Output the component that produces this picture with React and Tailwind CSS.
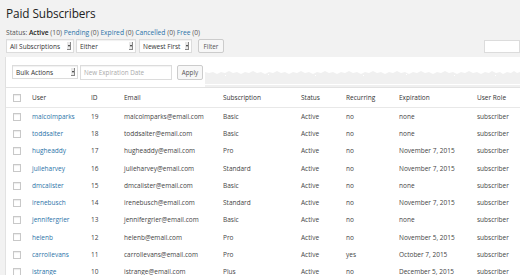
import React from "react";

const rows = [
  ["malcolmparks", "19", "Basic", "no", "none"],
  ["toddsalter", "18", "Basic", "no", "none"],
  ["hugheaddy", "17", "Pro", "no", "November 7, 2015"],
  ["julieharvey", "16", "Standard", "no", "November 7, 2015"],
  ["dmcalister", "15", "Basic", "no", "none"],
  ["irenebusch", "14", "Standard", "no", "November 7, 2015"],
  ["jennifergrier", "13", "Basic", "no", "none"],
  ["helenb", "12", "Pro", "no", "November 5, 2015"],
  ["carrollevans", "11", "Pro", "yes", "October 7, 2015"],
  ["istrange", "10", "Plus", "no", "December 5, 2015"],
];

function Select({ label, w }) {
  return (
    <div className={`flex items-center h-[14px] bg-white border border-[#dcdcdc] shadow-[inset_0_1px_1px_rgba(0,0,0,0.06)] pl-[3px] pr-[2px] ${w}`}>
      <span className="flex-1 text-[6.5px] text-[#333] leading-[9px] whitespace-nowrap">{label}</span>
      <span className="flex items-center justify-center w-[4px] h-[8px] ml-[1px] bg-[#e8e8e8] border-r border-b border-[#888]">
        <span className="w-0 h-0 border-l-[1.5px] border-r-[1.5px] border-t-[2px] border-l-transparent border-r-transparent border-t-[#222]" />
      </span>
    </div>
  );
}

function Btn({ label, w }) {
  return (
    <div className={`flex items-center justify-center h-[14px] bg-[#f7f7f7] border border-[#cccccc] rounded-[2px] text-[6.3px] leading-[9px] text-[#555] ${w}`}>
      {label}
    </div>
  );
}

function Check() {
  return <div className="w-[8px] h-[8px] border border-[#c8c8c8] bg-white shadow-[inset_0_1px_1px_rgba(0,0,0,0.08)]" />;
}

const grid = "grid grid-cols-[19px_59px_33px_99px_78px_45px_53px_78px_1fr] items-center pl-[7px]";

export default function App() {
  return (
    <div className="w-[520px] h-[275px] overflow-hidden bg-[#f2f2f2] text-[#444]" style={{ fontFamily: '"Open Sans", "Noto Sans", sans-serif' }}>
      <div className="pl-[6px] pt-[5px]">
        <div className="text-[11.8px] leading-[17px] text-[#222] tracking-[-0.1px]">Paid Subscribers</div>
        <div className="mt-[6px] text-[6.7px] leading-[9px] text-[#555] whitespace-nowrap">
          Status: <span className="text-[#222] font-semibold">Active</span> (10){" "}
          <span className="text-[#2a73a8]">Pending</span> (0){" "}
          <span className="text-[#2a73a8]">Expired</span> (0){" "}
          <span className="text-[#2a73a8]">Cancelled</span> (0){" "}
          <span className="text-[#2a73a8]">Free</span> (0)
        </div>
        <div className="flex items-center mt-[2px] h-[14px]">
          <Select label="All Subscriptions" w="w-[68px]" />
          <div className="w-[2px]" />
          <Select label="Either" w="w-[60px]" />
          <div className="w-[3px]" />
          <Select label="Newest First" w="w-[53px]" />
          <div className="w-[6px]" />
          <Btn label="Filter" w="w-[26px]" />
          <div className="flex-1" />
          <div className="w-[36px] h-[13px] bg-white border border-[#dcdcdc]" />
        </div>
      </div>
      <div className="flex mt-[4px] ml-[5px] h-[30px] border-l border-[#e0e0e0]">
        <div className="flex items-center w-[200px] bg-white pl-[6px] gap-[2px]">
          <Select label="Bulk Actions" w="w-[66px]" />
          <div className="w-[92px] h-[15px] bg-white border border-[#dcdcdc] text-[6.3px] leading-[9px] text-[#aaa] flex items-center pl-[3px] shadow-[inset_0_1px_1px_rgba(0,0,0,0.05)]">New Expiration Date</div>
          <div className="w-[1px]" />
          <Btn label="Apply" w="w-[26px] h-[15px]" />
        </div>
        <div className="flex-1 flex flex-col">
          <div className="h-[12px] bg-white" />
          <svg className="block" width="315" height="8" viewBox="0 0 315 8" preserveAspectRatio="none">
            <rect width="315" height="8" fill="#f0f0f0" />
            <path
              d="M0 0 H315 V3 L312 4 L309 2 L306 4 L302 3 L298 5 L295 3 L291 4 L287 2 L284 4 L280 3 L276 5 L272 3 L268 4 L264 2 L260 4 L256 3 L252 5 L248 3 L244 4 L240 2 L236 4 L232 3 L228 5 L224 3 L220 4 L216 2 L212 4 L208 3 L204 5 L200 3 L196 4 L192 2 L188 4 L184 3 L180 5 L176 3 L172 4 L168 2 L164 4 L160 3 L156 5 L152 3 L148 4 L144 2 L140 4 L136 3 L132 5 L128 3 L124 4 L120 2 L116 4 L112 3 L108 5 L104 3 L100 4 L96 2 L92 4 L88 3 L84 5 L80 3 L76 4 L72 2 L68 4 L64 3 L60 5 L56 3 L52 4 L48 2 L44 4 L40 3 L36 5 L32 3 L28 4 L24 2 L20 4 L16 3 L12 5 L8 3 L4 4 L0 3 Z"
              fill="#ffffff"
            />
            <g fill="#ffffff">
              <rect x="20" y="6" width="1" height="1" />
              <rect x="63" y="5" width="1" height="1" />
              <rect x="110" y="6" width="1" height="1" />
              <rect x="158" y="6" width="1" height="1" />
              <rect x="201" y="5" width="1" height="1" />
              <rect x="249" y="6" width="1" height="1" />
              <rect x="290" y="6" width="1" height="1" />
            </g>
          </svg>
          <div className="flex-1 bg-[#f0f0f0]" />
          <div className="h-[1px] bg-white" />
          <div className="h-[2px] bg-[#f0f0f0]" />
        </div>
      </div>
      <div className="ml-[5px] bg-white border-l border-t border-[#e2e2e2] text-[6.5px]">
        <div className={`${grid} h-[20px] border-b border-[#e8e8e8] text-[#333]`}>
          <Check />
          <span>User</span>
          <span>ID</span>
          <span>Email</span>
          <span>Subscription</span>
          <span>Status</span>
          <span>Recurring</span>
          <span>Expiration</span>
          <span>User Role</span>
        </div>
        {rows.map((r) => (
          <div key={r[0]} className={`${grid} h-[17.25px] text-[#444]`}>
            <Check />
            <span className="text-[#2a73a8]">{r[0]}</span>
            <span>{r[1]}</span>
            <span>{r[0]}@email.com</span>
            <span>{r[2]}</span>
            <span>Active</span>
            <span>{r[3]}</span>
            <span>{r[4]}</span>
            <span>subscriber</span>
          </div>
        ))}
      </div>
    </div>
  );
}
